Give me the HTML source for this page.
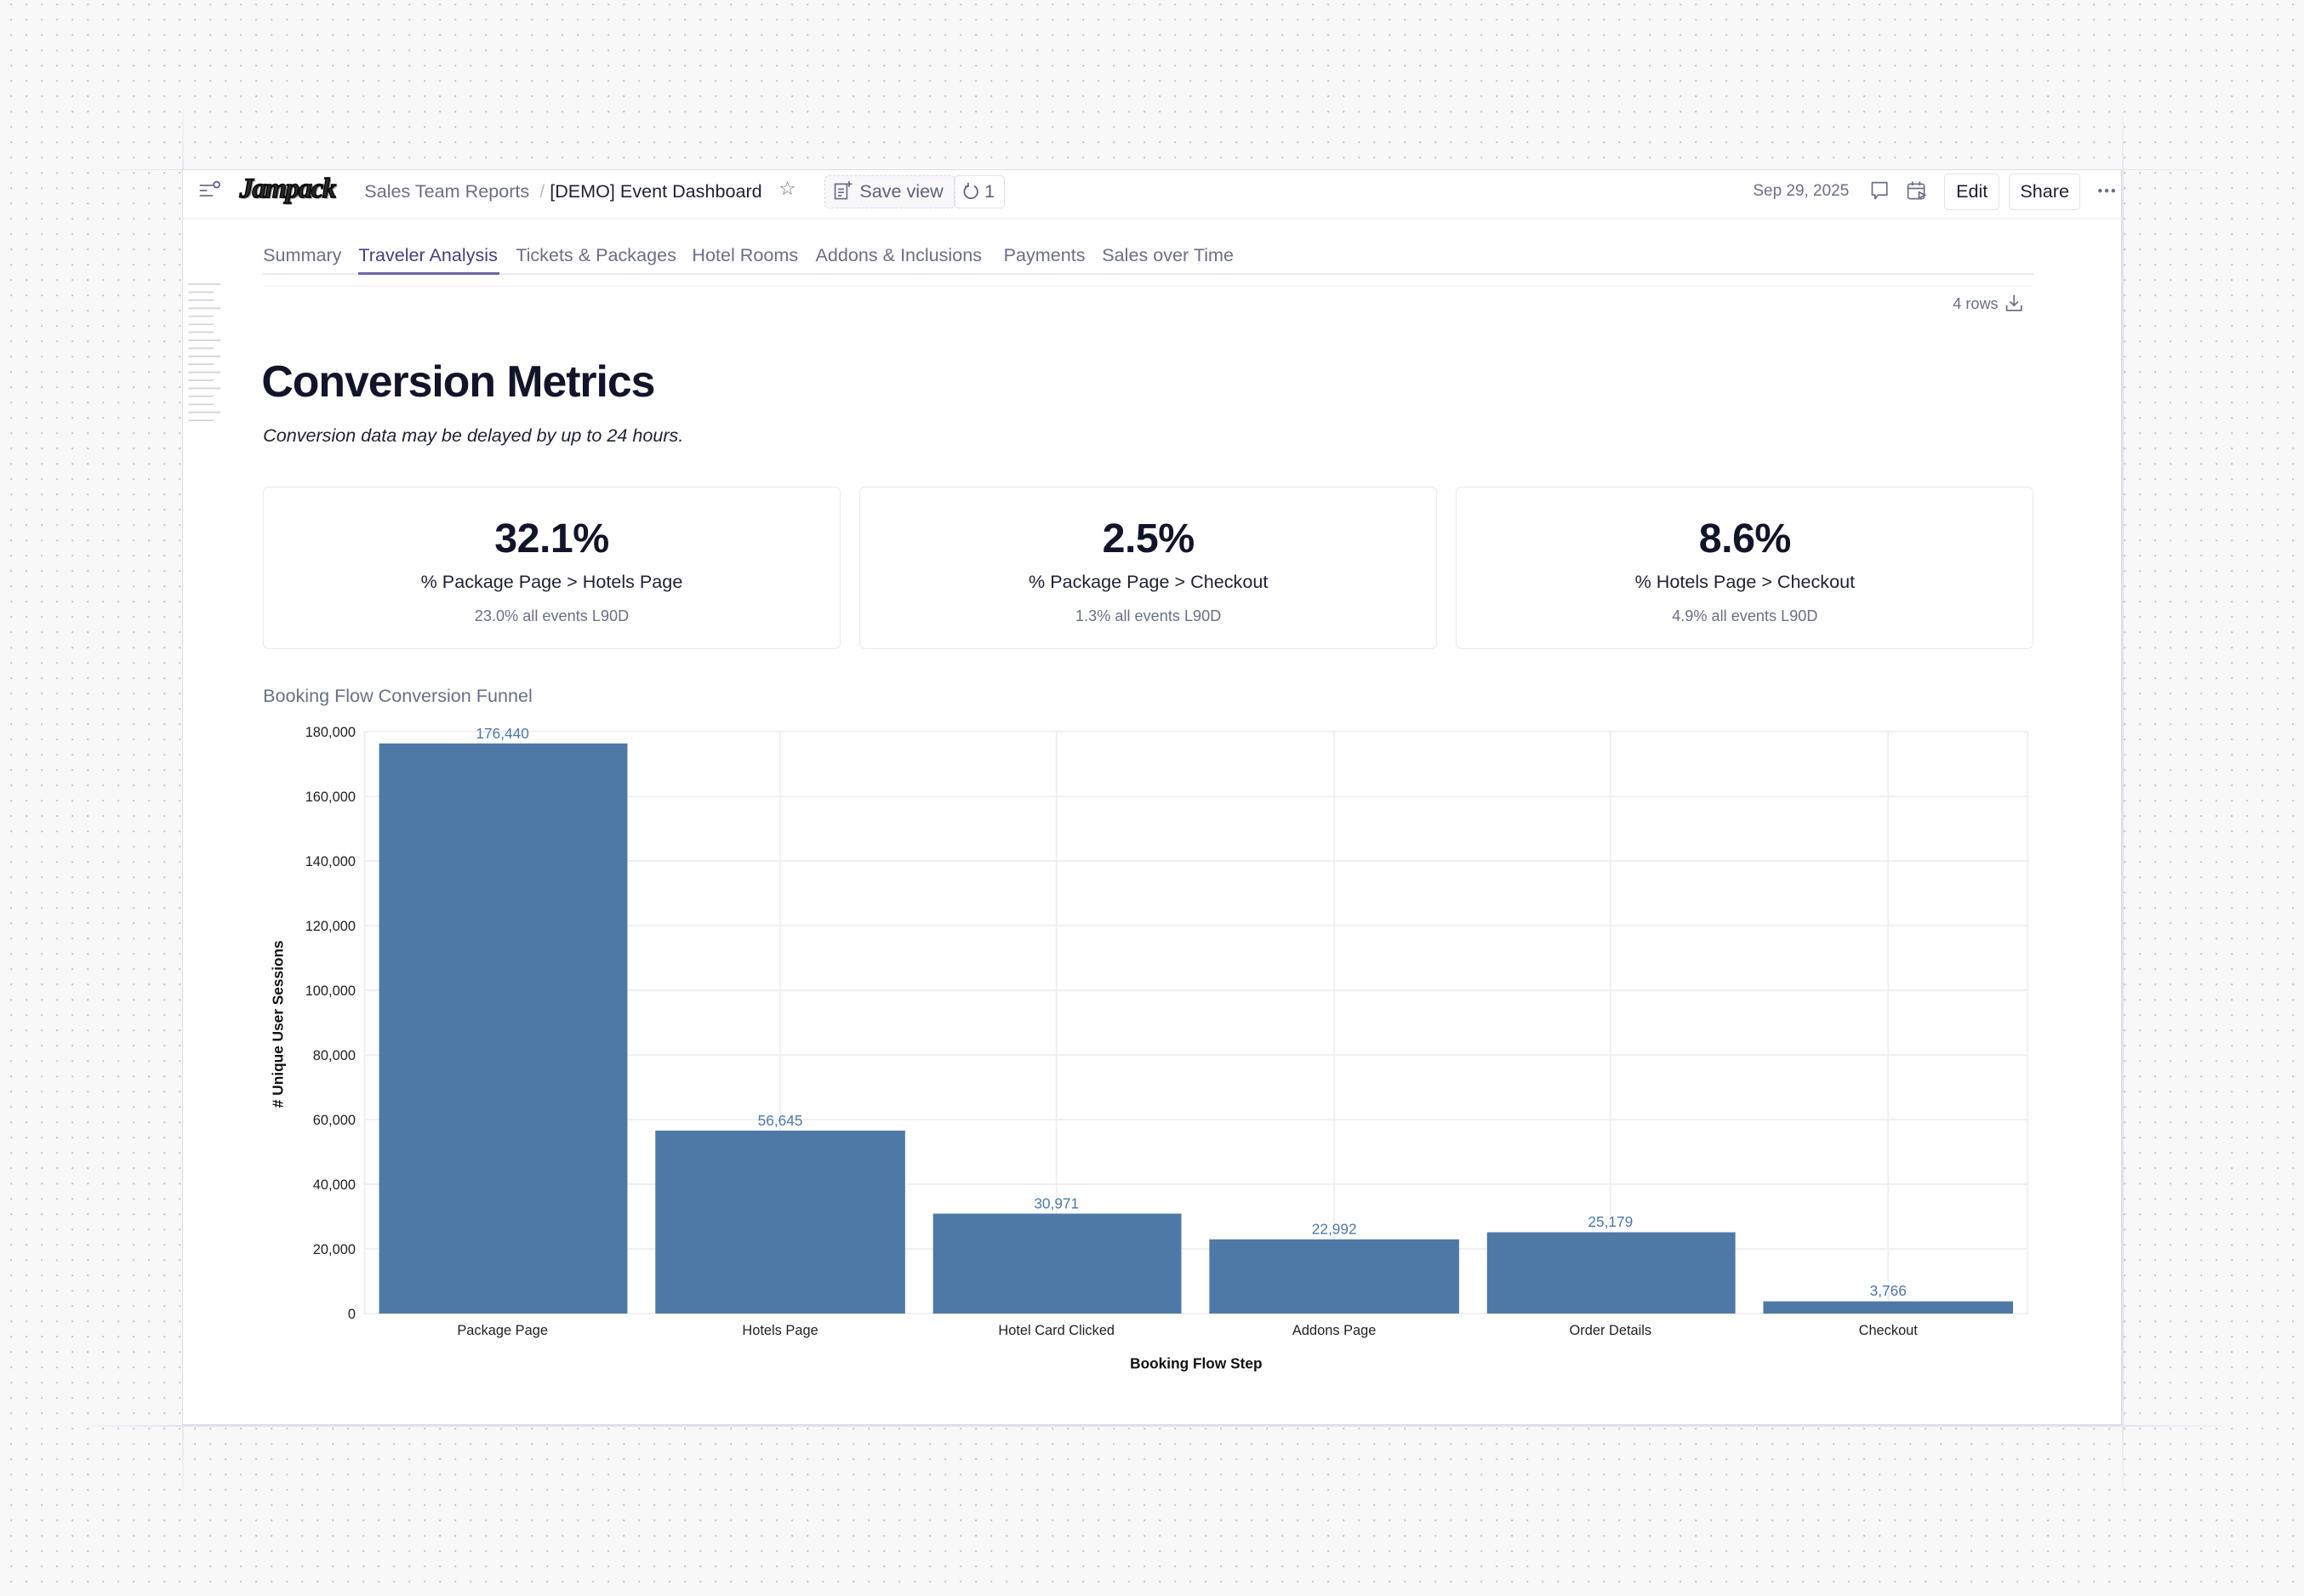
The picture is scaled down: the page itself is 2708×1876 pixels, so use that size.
<!DOCTYPE html>
<html><head><meta charset="utf-8">
<style>
html,body{margin:0;padding:0;}
body{width:2708px;height:1876px;overflow:hidden;background-color:#f9f8f9;
background-image:radial-gradient(circle at 1.2px 1.2px,#c4c1c9 0.9px,transparent 1.4px);
background-size:18px 18px;background-position:12px 4px;font-family:"Liberation Sans",sans-serif;}
#w{position:absolute;left:0;top:0;width:1568px;height:1086px;zoom:1.72704;}
.abs{position:absolute;}
.panel{left:124px;top:115px;width:1320px;height:855px;background:#fff;border:1px solid #dddbe8;box-sizing:border-box;}
.hdr{left:124px;top:115px;width:1320px;height:34px;border-bottom:1px solid #ecebf1;box-sizing:border-box;}
.t{white-space:nowrap;}
.btn{border:1px solid #e3e2e8;border-radius:3px;box-sizing:border-box;font-size:12.5px;color:#1f2133;display:flex;align-items:center;justify-content:center;}
.tab{top:166px;font-size:12.5px;color:#6b6f85;}
.card{top:331px;width:393px;height:111px;border:1px solid #e9e8ee;border-radius:4px;box-sizing:border-box;text-align:center;}
.card .n{position:absolute;left:0;right:0;top:19px;font-size:28px;font-weight:bold;color:#12142a;letter-spacing:-0.3px;}
.card .l{position:absolute;left:0;right:0;top:57px;font-size:12.5px;color:#1f2133;}
.card .s{position:absolute;left:0;right:0;top:82px;font-size:10.5px;color:#6b6f85;}
</style></head><body>
<div id="w">
<div class="abs" style="left:124px;top:60px;width:1px;height:970px;background:linear-gradient(#e6e4ee00,#e2e0ec 8%,#e2e0ec 92%,#e6e4ee00)"></div>
<div class="abs" style="left:1444px;top:60px;width:1px;height:970px;background:linear-gradient(#e6e4ee00,#e2e0ec 8%,#e2e0ec 92%,#e6e4ee00)"></div>
<div class="abs" style="left:40px;top:115px;width:1490px;height:1px;background:linear-gradient(90deg,#e6e4ee00,#e2e0ec 6%,#e2e0ec 94%,#e6e4ee00)"></div>
<div class="abs" style="left:40px;top:970px;width:1490px;height:1px;background:linear-gradient(90deg,#e6e4ee00,#e2e0ec 6%,#e2e0ec 94%,#e6e4ee00)"></div>

<div class="abs panel"></div>
<div class="abs hdr"></div>

<svg class="abs" style="left:135px;top:122px" width="18" height="14" viewBox="0 0 18 14">
<line x1="1" y1="4" x2="10" y2="4" stroke="#6b6f85" stroke-width="1"/>
<line x1="1" y1="7.5" x2="6" y2="7.5" stroke="#6b6f85" stroke-width="1"/>
<line x1="1" y1="11" x2="10" y2="11" stroke="#6b6f85" stroke-width="1"/>
<circle cx="12.5" cy="3.5" r="2" fill="none" stroke="#5a56a0" stroke-width="1"/>
</svg>
<div class="abs t" style="left:163px;top:118px;font-family:'Liberation Serif',serif;font-style:italic;font-weight:bold;font-size:19px;color:#2a2a2a;-webkit-text-stroke:0.8px #000;text-shadow:0 0 1px #777,1px 1px 0 #999;letter-spacing:-0.8px">Jampack</div>
<div class="abs t" style="left:248px;top:123px;font-size:12.5px;color:#6b6f85">Sales Team Reports <span style="color:#b8bac8">&nbsp;/&nbsp;</span><span style="color:#1f2133">[DEMO] Event Dashboard</span></div>
<div class="abs t" style="left:530px;top:121px;font-size:13px;color:#6b6f85">☆</div>
<div class="abs" style="left:561px;top:119px;width:89px;height:23px;border:1px dashed #dcdbe2;border-radius:3px;background:#f8f8fa;box-sizing:border-box"></div>
<svg class="abs" style="left:567px;top:123px" width="14" height="14" viewBox="0 0 14 14"><rect x="1.5" y="2.5" width="8" height="10" fill="none" stroke="#6b6f85" stroke-width="1"/><line x1="3.5" y1="6" x2="7.5" y2="6" stroke="#6b6f85"/><line x1="3.5" y1="8.2" x2="7.5" y2="8.2" stroke="#6b6f85"/><line x1="3.5" y1="10.4" x2="6" y2="10.4" stroke="#6b6f85"/><line x1="11" y1="0.5" x2="11" y2="4.5" stroke="#6b6f85"/><line x1="9" y1="2.5" x2="13" y2="2.5" stroke="#6b6f85"/></svg>
<div class="abs t" style="left:585px;top:123px;font-size:12.5px;color:#5e6178">Save view</div>
<div class="abs" style="left:649px;top:119px;width:35px;height:23px;border:1px solid #e3e2e8;border-radius:3px;box-sizing:border-box"></div>
<svg class="abs" style="left:655px;top:124px" width="12" height="13" viewBox="0 0 12 13"><path d="M4 2.5 A4.5 4.5 0 1 0 8 2.6" fill="none" stroke="#5e6178" stroke-width="1"/><path d="M4 0.5 L4 3 L1.8 3" fill="none" stroke="#5e6178" stroke-width="1"/></svg>
<div class="abs t" style="left:670px;top:123px;font-size:12.5px;color:#5e6178">1</div>

<div class="abs t" style="left:1193px;top:124px;font-size:11px;color:#6b6f85">Sep 29, 2025</div>
<svg class="abs" style="left:1272px;top:123px" width="14" height="14" viewBox="0 0 14 14"><path d="M2 1.5 H12 V10 H6 L4 12.5 V10 H2 Z" fill="none" stroke="#6b6f85" stroke-width="1" stroke-linejoin="round"/></svg>
<svg class="abs" style="left:1297px;top:123px" width="15" height="14" viewBox="0 0 15 14"><rect x="1.5" y="2.5" width="11" height="10" rx="1.5" fill="none" stroke="#6b6f85"/><line x1="1.5" y1="5.5" x2="12.5" y2="5.5" stroke="#6b6f85"/><line x1="4.5" y1="0.8" x2="4.5" y2="3.5" stroke="#6b6f85"/><line x1="9.5" y1="0.8" x2="9.5" y2="3.5" stroke="#6b6f85"/><path d="M9 8 L13 10 L9 12 Z" fill="#fff" stroke="#6b6f85"/></svg>
<div class="abs btn" style="left:1323px;top:118px;width:38px;height:25px">Edit</div>
<div class="abs btn" style="left:1367px;top:118px;width:49px;height:25px">Share</div>
<svg class="abs" style="left:1427px;top:127px" width="14" height="6"><circle cx="2.5" cy="3" r="1.3" fill="#6b6f85"/><circle cx="7" cy="3" r="1.3" fill="#6b6f85"/><circle cx="11.5" cy="3" r="1.3" fill="#6b6f85"/></svg>

<div class="abs tab t" style="left:179px">Summary</div>
<div class="abs tab t" style="left:244px;color:#45417f">Traveler Analysis</div>
<div class="abs tab t" style="left:351px">Tickets &amp; Packages</div>
<div class="abs tab t" style="left:471px">Hotel Rooms</div>
<div class="abs tab t" style="left:555px">Addons &amp; Inclusions</div>
<div class="abs tab t" style="left:683px">Payments</div>
<div class="abs tab t" style="left:750px">Sales over Time</div>
<div class="abs" style="left:179px;top:186px;width:1205px;height:1px;background:#eceaf0"></div>
<div class="abs" style="left:244px;top:185px;width:96px;height:2px;background:#6b67a6"></div>
<div class="abs" style="left:179px;top:192px;width:1205px;height:3px;border-bottom:1px solid #f1f0f4;box-sizing:border-box"></div>
<div class="abs t" style="left:1329px;top:201px;font-size:10.5px;color:#6b6f85">4 rows</div>
<svg class="abs" style="left:1364px;top:200px" width="13" height="13" viewBox="0 0 13 13"><path d="M6.5 1 V8 M3.8 5.5 L6.5 8.2 L9.2 5.5 M1.5 8 V11.5 H11.5 V8" fill="none" stroke="#6b6f85" stroke-width="1"/></svg>

<svg class="abs" style="left:126px;top:190px" width="26" height="100">
<g stroke="#d3d3da" stroke-width="1">
<line x1="2" y1="3.5" x2="24" y2="3.5"/><line x1="2" y1="9" x2="19" y2="9"/><line x1="2" y1="14.4" x2="19" y2="14.4"/><line x1="2" y1="19.9" x2="24" y2="19.9"/><line x1="2" y1="25.3" x2="19" y2="25.3"/><line x1="2" y1="30.8" x2="19" y2="30.8"/><line x1="2" y1="36.2" x2="19" y2="36.2"/><line x1="2" y1="41.7" x2="24" y2="41.7"/><line x1="2" y1="47.1" x2="19" y2="47.1"/><line x1="2" y1="52.6" x2="24" y2="52.6"/><line x1="2" y1="58" x2="19" y2="58"/><line x1="2" y1="63.5" x2="24" y2="63.5"/><line x1="2" y1="68.9" x2="19" y2="68.9"/><line x1="2" y1="74.4" x2="24" y2="74.4"/><line x1="2" y1="79.8" x2="19" y2="79.8"/><line x1="2" y1="85.3" x2="19" y2="85.3"/><line x1="2" y1="90.7" x2="24" y2="90.7"/><line x1="2" y1="96.2" x2="19" y2="96.2"/>
</g></svg>

<div class="abs t" style="left:178px;top:242px;font-size:30px;font-weight:bold;color:#12142a;letter-spacing:-0.6px">Conversion Metrics</div>
<div class="abs t" style="left:179px;top:289px;font-size:12.5px;font-style:italic;color:#1f2133">Conversion data may be delayed by up to 24 hours.</div>

<div class="abs card" style="left:179px"><div class="n">32.1%</div><div class="l">% Package Page &gt; Hotels Page</div><div class="s">23.0% all events L90D</div></div>
<div class="abs card" style="left:585px"><div class="n">2.5%</div><div class="l">% Package Page &gt; Checkout</div><div class="s">1.3% all events L90D</div></div>
<div class="abs card" style="left:991px"><div class="n">8.6%</div><div class="l">% Hotels Page &gt; Checkout</div><div class="s">4.9% all events L90D</div></div>

<div class="abs t" style="left:179px;top:466px;font-size:12.5px;color:#6b6f85">Booking Flow Conversion Funnel</div>

<svg class="abs" style="left:0;top:0" width="1568" height="1086" font-family="Liberation Sans, sans-serif">
<g stroke="#eeeef2" stroke-width="1">
<line x1="248" y1="498" x2="1380" y2="498"/><line x1="248" y1="542" x2="1380" y2="542"/><line x1="248" y1="586" x2="1380" y2="586"/><line x1="248" y1="630" x2="1380" y2="630"/><line x1="248" y1="674" x2="1380" y2="674"/><line x1="248" y1="718" x2="1380" y2="718"/><line x1="248" y1="762" x2="1380" y2="762"/><line x1="248" y1="806" x2="1380" y2="806"/><line x1="248" y1="850" x2="1380" y2="850"/><line x1="248" y1="894" x2="1380" y2="894"/>
<line x1="248" y1="498" x2="248" y2="894"/><line x1="1380" y1="498" x2="1380" y2="894"/>
<line x1="342" y1="498" x2="342" y2="894"/><line x1="531" y1="498" x2="531" y2="894"/><line x1="719" y1="498" x2="719" y2="894"/><line x1="908" y1="498" x2="908" y2="894"/><line x1="1096" y1="498" x2="1096" y2="894"/><line x1="1285" y1="498" x2="1285" y2="894"/>
</g>
<g fill="#222" font-size="9.5" text-anchor="end">
<text x="242" y="501.5">180,000</text><text x="242" y="545.5">160,000</text><text x="242" y="589.5">140,000</text><text x="242" y="633.5">120,000</text><text x="242" y="677.5">100,000</text><text x="242" y="721.5">80,000</text><text x="242" y="765.5">60,000</text><text x="242" y="809.5">40,000</text><text x="242" y="853.5">20,000</text><text x="242" y="897.5">0</text>
</g>
<g fill="#4e79a7">
<rect x="258" y="506" width="169" height="388"/>
<rect x="446" y="769.5" width="170" height="124.5"/>
<rect x="635" y="826" width="169" height="68"/>
<rect x="823" y="843.5" width="170" height="50.5"/>
<rect x="1012" y="838.7" width="169" height="55.3"/>
<rect x="1200" y="885.7" width="170" height="8.3"/>
</g>
<g fill="#4e79a7" font-size="10" text-anchor="middle">
<text x="342" y="502.5">176,440</text><text x="531" y="766">56,645</text><text x="719" y="822.5">30,971</text><text x="908" y="840">22,992</text><text x="1096" y="835">25,179</text><text x="1285" y="882">3,766</text>
</g>
<g fill="#222" font-size="9.5" text-anchor="middle">
<text x="342" y="908.5">Package Page</text><text x="531" y="908.5">Hotels Page</text><text x="719" y="908.5">Hotel Card Clicked</text><text x="908" y="908.5">Addons Page</text><text x="1096" y="908.5">Order Details</text><text x="1285" y="908.5">Checkout</text>
</g>
<text x="814" y="931.5" font-size="10" font-weight="bold" fill="#111" text-anchor="middle">Booking Flow Step</text>
<text transform="translate(192.5 697) rotate(-90)" font-size="10" font-weight="bold" fill="#111" text-anchor="middle"># Unique User Sessions</text>
</svg>
</div>
</body></html>
